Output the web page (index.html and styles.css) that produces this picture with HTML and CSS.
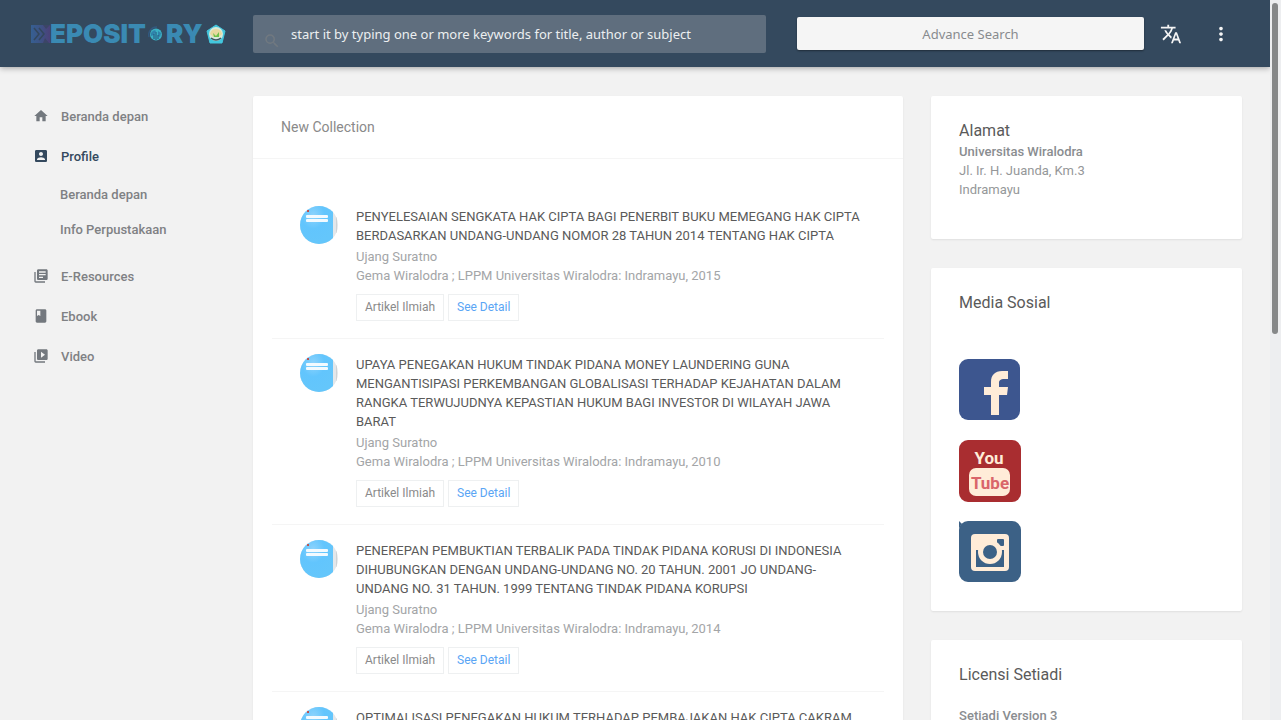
FILE: index.html
```html
<!DOCTYPE html>
<html lang="id">
<head>
<meta charset="utf-8">
<meta name="viewport" content="width=device-width, initial-scale=1">
<title>Repository</title>
<link rel="stylesheet" href="styles.css">
</head>
<body>
<svg class="defs" aria-hidden="true">
  <defs>
    <radialGradient id="cover-fill" cx="40%" cy="25%" r="70%">
      <stop offset="0" stop-color="#8dd3fc"/><stop offset=".5" stop-color="#62c5fd"/><stop offset="1" stop-color="#64c6fb"/>
    </radialGradient>
    <clipPath id="cover-clip"><circle cx="19" cy="19" r="19"/></clipPath>
    <symbol id="cover" viewBox="0 0 38 38">
      <g clip-path="url(#cover-clip)">
        <rect width="38" height="38" fill="#e3e7ea"/>
        <rect x="36" width="1" height="38" fill="#cfd3d6"/>
        <rect width="33" height="38" fill="url(#cover-fill)"/>
        <rect x="7" y="4" width="2" height="2" fill="#c0504d"/>
        <rect x="6" y="9" width="22" height="3" rx="1" fill="#f2faff"/>
        <rect x="6" y="13" width="22" height="3" rx="1" fill="#f2faff"/>
      </g>
    </symbol>
  </defs>
</svg>
<div class="app">
  <div class="page">
    <header class="topbar">
      <a class="logo" href="#" aria-label="Repository">
        <svg class="logo-r" viewBox="0 0 19 18" aria-hidden="true">
          <defs><linearGradient id="rg"><stop offset="0" stop-color="#365f92"/><stop offset=".5" stop-color="#3d5385"/><stop offset="1" stop-color="#4b4179"/></linearGradient></defs>
          <rect width="19" height="18" fill="url(#rg)"/>
          <path d="M3 3l5 6-5 6M8 3l5 6-5 6" fill="none" stroke="#33475d" stroke-width="1.500"/>
          <path d="M12 0l3 4 4-4zM14 13l-2 5h6z" fill="#3c4567"/>
        </svg>
        <span>EPOSIT</span>
        <svg class="logo-o" viewBox="0 0 20 18" aria-hidden="true">
          <path d="M3 12A8 8 0 0 1 11 2" fill="none" stroke="#31597f" stroke-width="1.500"/>
          <circle cx="10" cy="9.500" r="6" fill="#3bb0c4"/>
          <path d="M5 8q3-4 5-2l-2 4-3 1zM12 6l3 2-1 4-2-1z" fill="#2f83ab"/>
          <path d="M8 14V9M10 15V7M12 14v-4" stroke="#24507d"/>
        </svg>
        <span>RY</span>
        <svg class="logo-seal" viewBox="0 0 20 20" aria-hidden="true">
          <path d="M10 1l9 6-3 12H4L1 7z" fill="#43c7de" stroke="#43c7de" stroke-linejoin="round"/>
          <circle cx="10" cy="10" r="7" fill="#d8ead9"/>
          <path d="M4 10q1-5 6-5t6 5l-3 3H7z" fill="#e8d9a0"/>
          <path d="M7 9l3 3 3-4v5H8z" fill="#6cc24a"/>
          <path d="M5 14q5 4 10 0" fill="none" stroke="#3d5563" stroke-width="1.500"/>
        </svg>
      </a>
      <form class="search" role="search">
        <svg class="search-icon" viewBox="0 0 24 24" aria-hidden="true"><path d="M15.500 14h-.79l-.28-.27A6.470 6.470 0 0 0 16 9.500 6.500 6.500 0 1 0 9.500 16c1.610 0 3.090-.59 4.230-1.570l.27.28v.79l5 4.990L20.490 19l-4.990-5zm-6 0C7.010 14 5 11.990 5 9.500S7.010 5 9.500 5 14 7.010 14 9.500 11.990 14 9.500 14z"/></svg>
        <input class="search-input" type="search" aria-label="Search" placeholder="start it by typing one or more keywords for title, author or subject">
      </form>
      <button class="advance" type="button">Advance Search</button>
      <div class="tools">
        <button class="tool" type="button" aria-label="Language"><svg viewBox="0 0 24 24"><path d="M12.870 15.070l-2.540-2.510.03-.03c1.740-1.940 2.980-4.170 3.710-6.530H17V4h-7V2H8v2H1v1.990h11.170C11.500 7.920 10.440 9.750 9 11.350 8.070 10.320 7.300 9.190 6.690 8h-2c.73 1.630 1.730 3.170 2.980 4.560l-5.090 5.020L4 19l5-5 3.110 3.110.76-2.040zM18.500 10h-2L12 22h2l1.120-3h4.750L21 22h2l-4.500-12zm-2.620 7l1.620-4.330L19.120 17h-3.240z"/></svg></button>
        <button class="tool" type="button" aria-label="More"><svg viewBox="0 0 24 24"><path d="M12 8c1.100 0 2-.9 2-2s-.9-2-2-2-2 .9-2 2 .9 2 2 2zm0 2c-1.100 0-2 .9-2 2s.9 2 2 2 2-.9 2-2-.9-2-2-2zm0 6c-1.100 0-2 .9-2 2s.9 2 2 2 2-.9 2-2-.9-2-2-2z"/></svg></button>
      </div>
    </header>

    <div class="columns">
      <nav class="menu">
        <a class="menu-item" href="#"><svg viewBox="0 0 24 24"><path d="M10 20v-6h4v6h5v-8h3L12 3 2 12h3v8z"/></svg>Beranda depan</a>
        <a class="menu-item active" href="#"><svg viewBox="0 0 24 24"><path d="M3 5v14c0 1.100.89 2 2 2h14c1.100 0 2-.9 2-2V5c0-1.100-.9-2-2-2H5c-1.110 0-2 .9-2 2zm12 4c0 1.660-1.340 3-3 3s-3-1.340-3-3 1.340-3 3-3 3 1.340 3 3zm-9 8c0-2 4-3.100 6-3.100s6 1.100 6 3.100v1H6v-1z"/></svg>Profile</a>
        <div class="submenu">
          <a href="#">Beranda depan</a>
          <a href="#">Info Perpustakaan</a>
        </div>
        <a class="menu-item" href="#"><svg viewBox="0 0 24 24"><path d="M4 6H2v14c0 1.100.9 2 2 2h14v-2H4V6zm16-4H8c-1.100 0-2 .9-2 2v12c0 1.100.9 2 2 2h12c1.100 0 2-.9 2-2V4c0-1.100-.9-2-2-2zm-1 9H9V9h10v2zm-4 4H9v-2h6v2zm4-8H9V5h10v2z"/></svg>E-Resources</a>
        <a class="menu-item" href="#"><svg viewBox="0 0 24 24"><path d="M18 2H6c-1.100 0-2 .9-2 2v16c0 1.100.9 2 2 2h12c1.100 0 2-.9 2-2V4c0-1.100-.9-2-2-2zM6 4h5v8l-2.500-1.500L6 12V4z"/></svg>Ebook</a>
        <a class="menu-item" href="#"><svg viewBox="0 0 24 24"><path d="M4 6H2v14c0 1.100.9 2 2 2h14v-2H4V6zm16-4H8c-1.100 0-2 .9-2 2v12c0 1.100.9 2 2 2h12c1.100 0 2-.9 2-2V4c0-1.100-.9-2-2-2zm-8 12.500v-9l6 4.500-6 4.500z"/></svg>Video</a>
      </nav>

      <main class="card collection">
        <h1 class="collection-title">New Collection</h1>
        <div class="list">
          <article class="item">
            <svg class="cover" aria-hidden="true"><use href="#cover"/></svg>
            <div class="item-body">
              <h2>PENYELESAIAN SENGKATA HAK CIPTA BAGI PENERBIT BUKU MEMEGANG HAK CIPTA BERDASARKAN UNDANG-UNDANG NOMOR 28 TAHUN 2014 TENTANG HAK CIPTA</h2>
              <p>Ujang Suratno</p>
              <p>Gema Wiralodra ; LPPM Universitas Wiralodra: Indramayu, 2015</p>
              <div class="actions"><span class="chip">Artikel Ilmiah</span><a class="chip link" href="#">See Detail</a></div>
            </div>
          </article>
          <article class="item">
            <svg class="cover" aria-hidden="true"><use href="#cover"/></svg>
            <div class="item-body">
              <h2>UPAYA PENEGAKAN HUKUM TINDAK PIDANA MONEY LAUNDERING GUNA MENGANTISIPASI PERKEMBANGAN GLOBALISASI TERHADAP KEJAHATAN DALAM RANGKA TERWUJUDNYA KEPASTIAN HUKUM BAGI INVESTOR DI WILAYAH JAWA BARAT</h2>
              <p>Ujang Suratno</p>
              <p>Gema Wiralodra ; LPPM Universitas Wiralodra: Indramayu, 2010</p>
              <div class="actions"><span class="chip">Artikel Ilmiah</span><a class="chip link" href="#">See Detail</a></div>
            </div>
          </article>
          <article class="item">
            <svg class="cover" aria-hidden="true"><use href="#cover"/></svg>
            <div class="item-body">
              <h2>PENEREPAN PEMBUKTIAN TERBALIK PADA TINDAK PIDANA KORUSI DI INDONESIA DIHUBUNGKAN DENGAN UNDANG-UNDANG NO. 20 TAHUN. 2001 JO UNDANG-UNDANG NO. 31 TAHUN. 1999 TENTANG TINDAK PIDANA KORUPSI</h2>
              <p>Ujang Suratno</p>
              <p>Gema Wiralodra ; LPPM Universitas Wiralodra: Indramayu, 2014</p>
              <div class="actions"><span class="chip">Artikel Ilmiah</span><a class="chip link" href="#">See Detail</a></div>
            </div>
          </article>
          <article class="item">
            <svg class="cover" aria-hidden="true"><use href="#cover"/></svg>
            <div class="item-body">
              <h2>OPTIMALISASI PENEGAKAN HUKUM TERHADAP PEMBAJAKAN HAK CIPTA CAKRAM</h2>
            </div>
          </article>
        </div>
      </main>

      <aside class="side">
        <section class="card panel">
          <h2>Alamat</h2>
          <p class="address"><strong>Universitas Wiralodra</strong><br>Jl. Ir. H. Juanda, Km.3<br>Indramayu</p>
        </section>
        <section class="card panel">
          <h2>Media Sosial</h2>
          <div class="social">
            <a href="#" aria-label="Facebook"><svg viewBox="0 0 62 62"><rect width="61" height="61" rx="9" fill="#3d568f"/><path d="M32 56V36h-7v-8h7v-5c0-7 4-11 11-11h6v8h-4c-3 0-5 1-5 4v4h9l-1 8h-8v20z" fill="#ffecd8"/></svg></a>
            <a href="#" aria-label="YouTube"><svg viewBox="0 0 62 62"><rect width="62" height="62" rx="9" fill="#a92d30"/><rect x="10" y="28" width="41" height="28" rx="7" fill="#ffecd8"/><text class="yt" x="30" y="24" fill="#ffecd8">You</text><text class="yt" x="31" y="49" fill="#d9656a">Tube</text></svg></a>
            <a href="#" aria-label="Instagram"><svg viewBox="0 0 62 62"><rect width="62" height="61" rx="9" fill="#3c6186"/><path d="M0 0l3 3-3 4z" fill="#3c6186"/><rect x="12" y="13" width="38" height="37" rx="4" fill="#ffecd8"/><rect x="38" y="18" width="7" height="7" rx="1" fill="#3c6186"/><rect x="17" y="29" width="28" height="17" fill="#3c6186"/><circle cx="31" cy="31" r="12" fill="#ffecd8"/><circle cx="31" cy="31" r="7" fill="#3c6186"/></svg></a>
          </div>
        </section>
        <section class="card panel">
          <h2>Licensi Setiadi</h2>
          <p class="license"><strong>Setiadi Version 3</strong></p>
        </section>
      </aside>
    </div>
  </div>
  <div class="scrollbar" aria-hidden="true"><div class="thumb"></div></div>
</div>
</body>
</html>
```
FILE: styles.css
```css
* { box-sizing: border-box; }
body {
  margin: 0;
  background: #f2f2f2;
  color: #999;
  font: 13px/19px Roboto, sans-serif;
}
h1, h2, p { margin: 0; font-weight: 400; }
a { color: inherit; text-decoration: none; }
button, input { font: inherit; border: 0; }
.defs { position: absolute; width: 0; height: 0; }

.app { display: flex; height: 100vh; overflow: hidden; }
.page { flex: 1; min-width: 0; }
.scrollbar { width: 11px; padding: 3px 3px 3px 2px; background: #edeef0; }
.thumb { height: 46vh; border-radius: 3px; background: #868889; }

.topbar {
  display: flex;
  align-items: center;
  height: 67px;
  padding: 0 28px 0 31px;
  background: #34495e;
  box-shadow: 0 1px 6px rgba(0, 0, 0, .35);
}
.logo {
  display: flex;
  align-items: center;
  flex: 0 0 222px;
  color: #3a8ab3;
  font: 900 26px/26px Inter, sans-serif;
}
.logo-r { width: 19px; height: 18px; }
.logo-o { width: 20px; height: 18px; }
.logo-seal { width: 20px; height: 20px; margin-left: 3px; }

.search { position: relative; flex: 513 1 0; }
.search-icon {
  position: absolute;
  left: 10px;
  top: 17px;
  width: 18px;
  fill: #717980;
}
.search-input {
  display: block;
  width: 100%;
  height: 38px;
  padding: 0 16px 0 38px;
  border-radius: 2px;
  background: #5f6e7e;
  color: #eceef0;
  font: 13px/18px "Noto Sans", sans-serif;
}
.search-input::placeholder { color: #eceef0; opacity: 1; }
.advance {
  flex: 347 1 0;
  height: 33px;
  margin-left: 31px;
  padding: 0;
  border-radius: 2px;
  background: #f5f5f5;
  color: #888b8e;
  font: 13px/18px "Noto Sans", sans-serif;
  box-shadow: 0 1px 2px rgba(0, 0, 0, .4);
}
.tools { display: flex; gap: 26px; margin-left: 15px; padding-right: 9px; }
.tool { width: 24px; height: 24px; padding: 1px; background: none; }
.tool svg { display: block; width: 22px; fill: #f5f5f5; }

.columns {
  display: grid;
  grid-template-columns: 225px minmax(0, 23fr) minmax(0, 11fr);
  align-items: start;
  gap: 28px;
  padding: 29px 28px 0 0;
}
.menu { color: #7f8184; font-weight: 500; }
.menu-item { display: flex; align-items: center; gap: 12px; height: 40px; padding-left: 33px; }
.menu-item svg { width: 16px; fill: #73787e; }
.menu-item.active { color: #34495e; }
.menu-item.active svg { fill: #34495e; }
.submenu { padding: 1px 0 9px; }
.submenu a { display: block; padding: 8px 0 8px 60px; }

.card { background: #fff; border-radius: 2px; box-shadow: 0 1px 2px rgba(0, 0, 0, .08); }
.collection-title {
  padding: 22px 28px 21px;
  border-bottom: 1px solid #f5f5f5;
  color: #8a8a8a;
  font-size: 14px;
}
.list { padding: 32px 19px; }
.item {
  display: flex;
  gap: 18px;
  padding: 15px 20px 17px 28px;
  border-bottom: 1px solid #f5f5f5;
}
.cover { flex: none; width: 38px; height: 38px; }
.item-body { padding-top: 1px; }
.item h2 { margin-bottom: 2px; color: #5a5a5a; font-size: 13px; }
.item p { color: #a3a5a7; }
.actions { display: flex; gap: 4px; margin-top: 9px; }
.chip {
  padding: 3px 8px;
  border: 1px solid #eef0f1;
  color: #8a8a8a;
  font-size: 12px;
}
.chip.link { color: #5aa5f5; }

.side { display: grid; gap: 29px; }
.panel { padding: 24px 28px 28px; }
.panel h2 { color: #5a5a5a; font-size: 16px; line-height: 22px; }
.panel strong { color: #8a8d90; font-weight: 500; }
.address { margin-bottom: 12px; color: #959799; }
.license { margin-top: 20px; }
.social { display: grid; justify-items: start; gap: 19px; margin-top: 45px; }
.social svg { display: block; width: 62px; height: 62px; }
.yt { font: 700 17px Roboto, sans-serif; text-anchor: middle; }
```
